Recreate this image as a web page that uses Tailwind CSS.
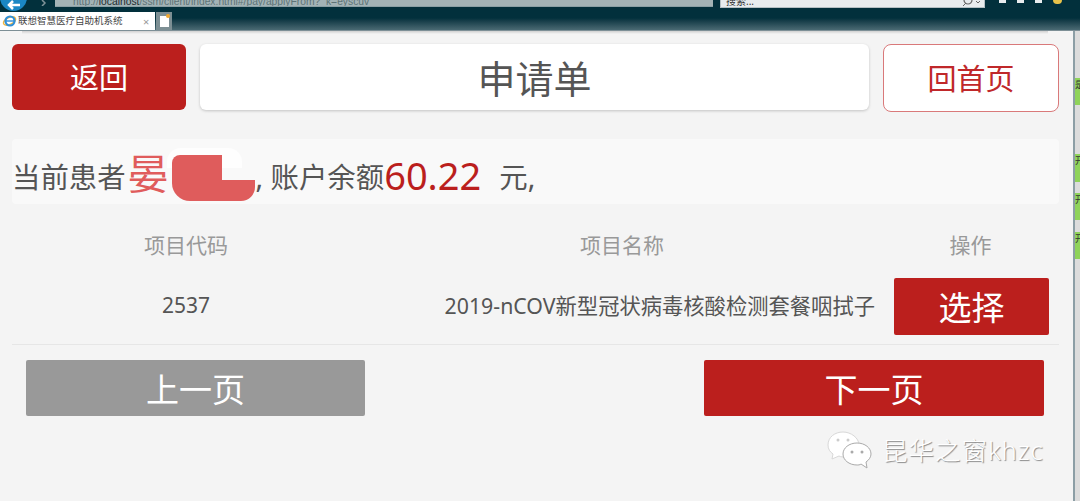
<!DOCTYPE html>
<html lang="zh-CN">
<head>
    <meta charset="UTF-8">
    <title>申请单</title>
    <script src="https://cdn.jsdelivr.net/npm/@tailwindcss/browser@4"></script>
</head>
<body class="w-[1080px] h-[501px] overflow-hidden bg-[#f4f4f4] font-['Noto_Sans','Noto_Sans_CJK_SC',sans-serif]">
    <!-- Browser chrome -->
    <div class="h-[31px] bg-gradient-to-b from-[#02303c] from-60% to-[#4a6a73] border-b border-[#7d8f96] flex flex-col relative">
        <div class="h-[12px] flex items-start overflow-hidden">
            <div class="w-[27px] h-[27px] rounded-full bg-[#1b87c4] -mt-[16px] flex items-center justify-center shrink-0">
                <svg width="14" height="10" viewBox="0 0 14 10" class="mt-[14px]"><path d="M13 5H3M6 1 2 5l4 4" fill="none" stroke="#fff" stroke-width="2.5"/></svg>
            </div>
            <svg width="8" height="6" viewBox="0 0 8 6" class="ml-[13px] shrink-0"><path d="M2 0l3 3-3 3" fill="none" stroke="#7f9298" stroke-width="1.5"/></svg>
            <div class="ml-[7px] w-[658px] h-[7px] bg-[#a3b3b6] border-b border-[#8aa0a5] text-[10.3px] leading-[3px] text-[#5d7377] pl-[18px] whitespace-nowrap overflow-hidden shrink-0 font-['Liberation_Sans',sans-serif]">http://<span class="text-[#1c2a2e]">localhost</span>/ssm/client/index.html#/pay/applyFrom?_k=eyscuv</div>
            <div class="ml-[7px] w-[265px] h-[8px] bg-[#e8ecee] border border-[#b5c0c4] border-t-0 text-[10px] leading-[3px] text-[#333] pl-[5px] shrink-0 flex justify-between overflow-hidden">
                <span>搜索...</span>
                <svg width="18" height="7" viewBox="0 0 18 7" class="mr-[4px]"><circle cx="6" cy="0" r="4" fill="none" stroke="#666" stroke-width="1.2"/><path d="M4 3 1 6M14 1l2 2 2-2" stroke="#666" fill="none"/></svg>
            </div>
            <div class="ml-[14px] flex gap-[11px] shrink-0">
                <div class="w-[7px] h-[3px] bg-[#e8ecee]"></div>
                <div class="w-[7px] h-[3px] bg-[#e8ecee]"></div>
                <div class="w-[7px] h-[3px] bg-[#e8ecee]"></div>
                <div class="w-[9px] h-[4px] rounded-b-full bg-[#e8c24a]"></div>
            </div>
        </div>
        <div class="flex items-end h-[18px]">
            <div class="w-[155px] h-[18px] bg-white flex items-center pl-[2px] shrink-0">
                <svg width="15" height="14" viewBox="0 0 15 14" class="shrink-0"><ellipse cx="7.5" cy="7" rx="6.5" ry="3.5" fill="none" stroke="#f2b53c" stroke-width="1.5" transform="rotate(-25 7.5 7)"/><circle cx="8" cy="7" r="4.5" fill="none" stroke="#2f8fd8" stroke-width="2.2"/><path d="M4 7h8" stroke="#2f8fd8" stroke-width="1.4"/></svg>
                <span class="ml-[1px] w-[104px] text-[9.5px] leading-none text-[#444] whitespace-nowrap">联想智慧医疗自助机系统</span>
                <span class="ml-[21px] text-[11px] leading-none text-[#999]">×</span>
            </div>
            <div class="ml-[1px] w-[16px] h-[18px] bg-[#7d8f94] flex items-center justify-center shrink-0 relative">
                <div class="w-[9px] h-[11px] bg-white"></div>
                <div class="absolute top-[2px] right-[2px] w-[4px] h-[4px] rounded-full bg-[#f0a830]"></div>
            </div>
        </div>
    </div>

    <div class="flex h-[470px]">
        <!-- Page -->
        <div class="w-[1073px] shrink-0 px-[12px] pt-[13px] relative">
            <!-- shadow of the tab bar -->
            <div class="absolute left-[22px] top-0 w-[1026px] h-[3px] bg-gradient-to-b from-black/15 to-transparent"></div>

            <div class="flex h-[68px] w-[1047px]">
                <button class="w-[174px] h-[66px] bg-[#bb1f1d] rounded-[6px] text-white text-[29px] leading-none">返回</button>
                <div class="ml-[14px] w-[669px] h-[66px] bg-white rounded-[6px] shadow-[0_1px_3px_rgba(0,0,0,0.2)] flex items-center justify-center text-[38px] text-[#555] pt-[2px]">申请单</div>
                <button class="ml-[14px] w-[176px] h-[68px] bg-white border border-[#d9797a] rounded-[8px] text-[#c0282a] text-[29px] leading-none">回首页</button>
            </div>

            <div class="mt-[27px] w-[1047px] h-[65px] bg-[#f9f9f9] rounded-[4px] flex items-center text-[28.4px] text-[#555] whitespace-nowrap relative">
                <span class="mt-[11px]">当前患者</span><span class="ml-[2px] text-[41px] leading-none text-[#e05c5c] mt-[3px]">晏</span><span class="w-[87px]"></span><span class="mt-[11px]">, 账户余额</span><span class="text-[38px] leading-none text-[#bb1f1d] mt-[6px]">60.22</span><span class="ml-[18px] mt-[11px]">元,</span>
                <!-- redaction smear -->
                <div class="absolute left-[155px] top-[9px] w-[75px] h-[20px] bg-white/80 rounded-t-[14px]"></div>
                <div class="absolute left-[160px] top-[16px] w-[50px] h-[46px] bg-[#df5c5c] rounded-bl-[18px] rounded-tl-[8px]"></div>
                <div class="absolute left-[209px] top-[41px] w-[34px] h-[21px] bg-[#df5c5c] rounded-br-[14px]"></div>
            </div>

            <div class="mt-[12px] w-[1047px] h-[129px] flex flex-col border-b border-[#e6e6e6]">
                <div class="h-[60px] grid grid-cols-[348px_524px_175px] items-center text-[21px] text-[#999] text-center">
                    <span>项目代码</span>
                    <span>项目名称</span>
                    <span class="pr-[2px]">操作</span>
                </div>
                <div class="h-[60px] grid grid-cols-[348px_524px_175px] items-center text-[21px] text-[#555] text-center">
                    <span>2537</span>
                    <span class="whitespace-nowrap text-right pr-[9px] text-[21.3px]">2019-nCOV新型冠状病毒核酸检测套餐咽拭子</span>
                    <div><button class="w-[155px] h-[57px] bg-[#bb1f1d] rounded-[2px] text-white text-[33px] leading-none pt-[3px]">选择</button></div>
                </div>
            </div>

            <div class="mt-[15px] ml-[14px] w-[1018px] flex justify-between">
                <button class="w-[339px] h-[56px] bg-[#999999] rounded-[2px] text-white text-[33px] leading-none pt-[3px]">上一页</button>
                <button class="w-[340px] h-[56px] bg-[#bb1f1d] rounded-[2px] text-white text-[33px] leading-none pt-[3px]">下一页</button>
            </div>

            <!-- Watermark -->
            <div class="absolute left-[827px] top-[399px] flex items-center">
                <svg width="45" height="40" viewBox="0 0 45 40">
                    <path d="M16 2C8 2 1 7 1 15c0 4 2 7 5 9l-1 5 7-3c2 1 4 1 6 1 8 0 14-5 14-12S24 2 16 2z" fill="#fff" stroke="#d8d8d8" stroke-width="1"/>
                    <circle cx="11" cy="10" r="1.5" fill="#ccc"/><circle cx="21" cy="10" r="1.5" fill="#ccc"/>
                    <path d="M30 13c-8 0-14 5-14 11s6 11 14 11c1 0 3 0 4-1l6 4-1-6c3-2 5-5 5-8 0-6-6-11-14-11z" fill="#fff" stroke="#aaa" stroke-width="1"/>
                    <circle cx="25" cy="22" r="1.5" fill="#aaa"/><circle cx="35" cy="22" r="1.5" fill="#aaa"/>
                </svg>
                <span class="ml-[10px] text-[25.5px] font-light text-white [text-shadow:1px_1px_1px_#888] whitespace-nowrap tracking-[1px]">昆华之窗khzc</span>
            </div>
        </div>

        <!-- Sliver of the window behind -->
        <div class="w-[7px] shrink-0 border-l-2 border-[#8c9ea5] bg-[#dcdcdc] flex flex-col">
            <div class="mt-[47px] h-[27px] bg-[#8fd35a] text-[9px] text-[#333] overflow-hidden">是</div>
            <div class="mt-[49px] h-[28px] bg-[#8fd35a] text-[9px] text-[#333] overflow-hidden">开</div>
            <div class="mt-[11px] h-[27px] bg-[#8fd35a] text-[9px] text-[#333] overflow-hidden">开</div>
            <div class="mt-[12px] h-[27px] bg-[#8fd35a] text-[9px] text-[#333] overflow-hidden">开</div>
        </div>
    </div>
</body>
</html>
